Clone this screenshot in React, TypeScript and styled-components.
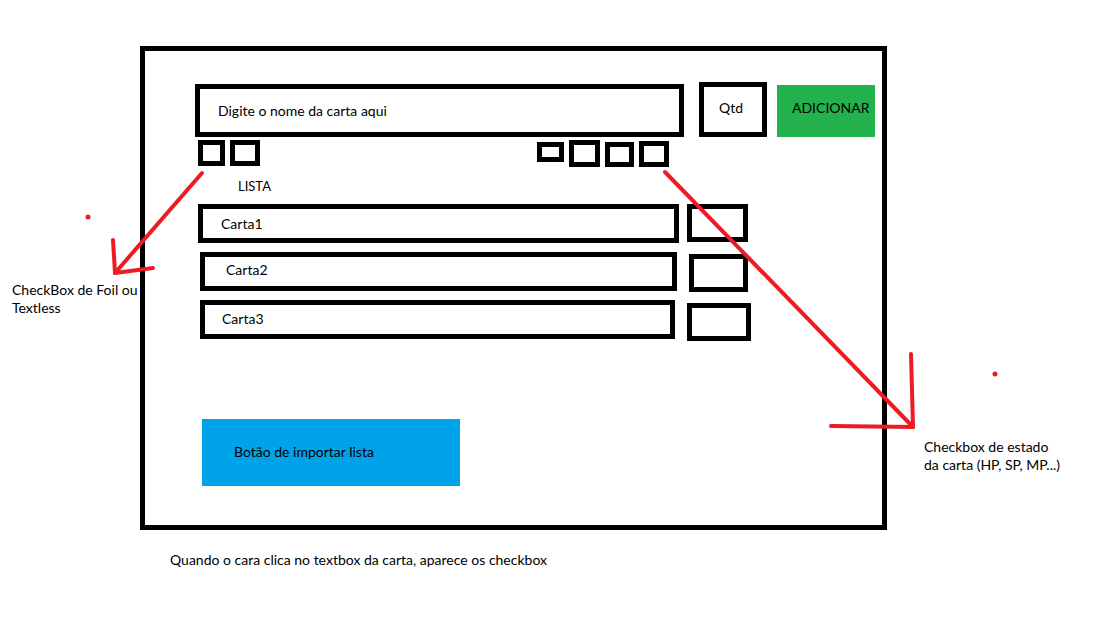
import React from "react";
import styled, { createGlobalStyle } from "styled-components";

const GlobalStyle = createGlobalStyle`
  html, body {
    margin: 0;
    padding: 0;
    background: #ffffff;
  }
  body {
    font-family: "Lato", "Open Sans", sans-serif;
    font-size: 14px;
    color: #000000;
  }
`;

const Page = styled.div`
  position: relative;
  width: 1117px;
  height: 623px;
  box-sizing: border-box;
  padding: 46px 0 0 140px;
  overflow: hidden;
`;

const Frame = styled.div`
  width: 747px;
  height: 484px;
  box-sizing: border-box;
  border: 5px solid #000;
  padding: 31px 0 0 50px;
  display: flex;
  flex-direction: column;
`;

const TopRow = styled.div`
  display: flex;
  align-items: flex-end;
  height: 55px;
`;

const Label = styled.span`
  font-family: "Lato", "Open Sans", sans-serif;
  font-size: 14px;
  line-height: 17px;
  white-space: nowrap;
`;

const NameInput = styled.div`
  width: 489px;
  height: 53px;
  box-sizing: border-box;
  border: 5px solid #000;
  display: flex;
  align-items: center;
  padding-left: 18px;
`;

const QtdBox = styled.div`
  width: 68px;
  height: 55px;
  margin-left: 15px;
  box-sizing: border-box;
  border: 5px solid #000;
  display: flex;
  align-items: center;
  padding: 0 0 4px 15px;
`;

const AddButton = styled.div`
  width: 98px;
  height: 52px;
  margin-left: 10px;
  box-sizing: border-box;
  background: #22b14c;
  display: flex;
  align-items: center;
  padding: 0 0 8px 15px;
`;

const OptionsRow = styled.div`
  display: flex;
  justify-content: space-between;
  width: 471px;
  height: 27px;
  margin: 3px 0 0 3px;
`;

const BoxGroup = styled.div`
  display: flex;
  align-items: flex-start;
  gap: 5px;
`;

const CheckBox = styled.div<{ $w: number; $h: number; $top?: number }>`
  width: ${(p) => p.$w}px;
  height: ${(p) => p.$h}px;
  margin-top: ${(p) => p.$top ?? 0}px;
  box-sizing: border-box;
  border: 5px solid #000;
`;

const ListTitle = styled(Label)`
  display: block;
  margin: 11px 0 0 43px;
  font-size: 13px;
`;

const List = styled.div`
  display: flex;
  flex-direction: column;
  margin-top: 9px;
`;

const CardRow = styled.div`
  display: flex;
  align-items: flex-start;
  height: 48px;
`;

const CardField = styled.div<{ $x: number; $w: number; $pad: number; $lift: number }>`
  width: ${(p) => p.$w}px;
  height: 39px;
  margin-left: ${(p) => p.$x}px;
  box-sizing: border-box;
  border: 5px solid #000;
  display: flex;
  align-items: center;
  padding: 0 0 ${(p) => p.$lift}px ${(p) => p.$pad}px;
`;

const QtyField = styled.div<{ $gap: number; $w: number; $top: number }>`
  width: ${(p) => p.$w}px;
  height: 38px;
  margin-left: ${(p) => p.$gap}px;
  margin-top: ${(p) => p.$top}px;
  box-sizing: border-box;
  border: 5px solid #000;
`;

const ImportButton = styled.div`
  width: 258px;
  height: 67px;
  margin: 71px 0 0 7px;
  box-sizing: border-box;
  background: #00a2e8;
  display: flex;
  align-items: center;
  padding: 0 0 3px 32px;
`;

const Caption = styled(Label)`
  display: block;
  margin: 21px 0 0 30px;
`;

const Note = styled.div<{ $x: number; $y: number; $lh: number }>`
  position: absolute;
  left: ${(p) => p.$x}px;
  top: ${(p) => p.$y}px;
  font-family: "Lato", "Open Sans", sans-serif;
  font-size: 14px;
  line-height: ${(p) => p.$lh}px;
  white-space: nowrap;
`;

const Overlay = styled.svg`
  position: absolute;
  left: 0;
  top: 0;
  pointer-events: none;
`;

const cards = [
  { name: "Carta1", x: 3, w: 481, pad: 18, lift: 1, gap: 8, qw: 61, qtop: 0 },
  { name: "Carta2", x: 5, w: 477, pad: 21, lift: 5, gap: 12, qw: 59, qtop: 2 },
  { name: "Carta3", x: 5, w: 475, pad: 17, lift: 2, gap: 12, qw: 64, qtop: 3 },
];

const RED = "#ed1c24";

export default function App() {
  return (
    <>
      <GlobalStyle />
      <Page>
        <Frame>
          <TopRow>
            <NameInput>
              <Label>Digite o nome da carta aqui</Label>
            </NameInput>
            <QtdBox>
              <Label>Qtd</Label>
            </QtdBox>
            <AddButton>
              <Label>ADICIONAR</Label>
            </AddButton>
          </TopRow>
          <OptionsRow>
            <BoxGroup>
              <CheckBox $w={27} $h={26} />
              <CheckBox $w={30} $h={26} />
            </BoxGroup>
            <BoxGroup>
              <CheckBox $w={27} $h={20} $top={2} />
              <CheckBox $w={31} $h={27} />
              <CheckBox $w={29} $h={25} $top={2} />
              <CheckBox $w={30} $h={26} $top={1} />
            </BoxGroup>
          </OptionsRow>
          <ListTitle>LISTA</ListTitle>
          <List>
            {cards.map((c) => (
              <CardRow key={c.name}>
                <CardField $x={c.x} $w={c.w} $pad={c.pad} $lift={c.lift}>
                  <Label>{c.name}</Label>
                </CardField>
                <QtyField $gap={c.gap} $w={c.qw} $top={c.qtop} />
              </CardRow>
            ))}
          </List>
          <ImportButton>
            <Label>Botão de importar lista</Label>
          </ImportButton>
        </Frame>
        <Caption>Quando o cara clica no textbox da carta, aparece os checkbox</Caption>

        <Overlay width="1117" height="623" viewBox="0 0 1117 623">
          <g stroke={RED} strokeWidth={4} strokeLinecap="round" fill="none">
            <line x1={202} y1={173} x2={115} y2={273} />
            <line x1={113} y1={240} x2={115} y2={273} />
            <line x1={115} y1={273} x2={153} y2={268} />
            <line x1={665} y1={172} x2={913} y2={427} />
            <line x1={911} y1={354} x2={913} y2={427} />
            <line x1={831} y1={426} x2={913} y2={427} />
          </g>
          <circle cx={88} cy={217} r={2.5} fill={RED} />
          <circle cx={995} cy={374} r={2.5} fill={RED} />
        </Overlay>

        <Note $x={12} $y={281} $lh={18}>
          CheckBox de Foil ou
          <br />
          Textless
        </Note>
        <Note $x={924} $y={438} $lh={17.5}>
          Checkbox de estado
          <br />
          da carta (HP, SP, MP...)
        </Note>
      </Page>
    </>
  );
}
